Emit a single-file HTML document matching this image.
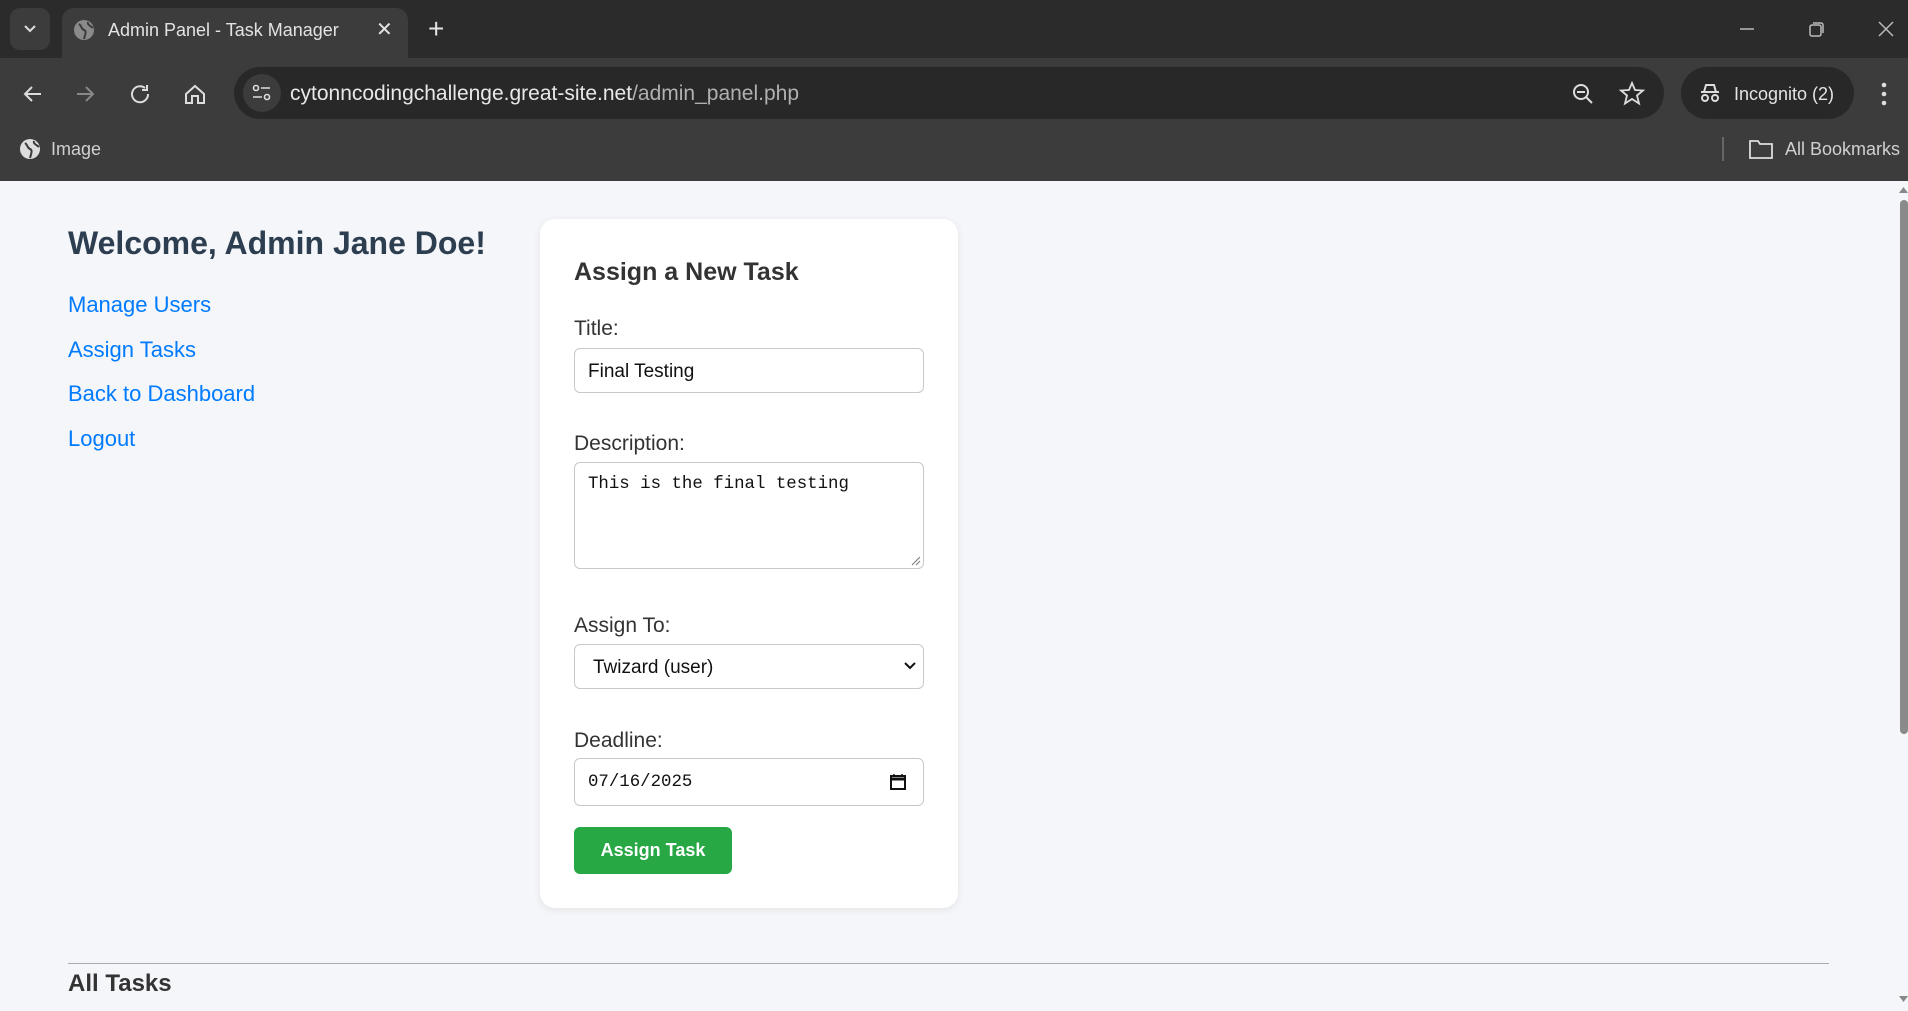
<!DOCTYPE html>
<html><head><meta charset="utf-8"><style>
*{box-sizing:border-box;margin:0;padding:0}
body{width:1908px;height:1011px;overflow:hidden;background:#f4f6f9;font-family:"Liberation Sans",sans-serif;position:relative}
.abs{position:absolute}
.chrome-top{left:0;top:0;width:1908px;height:58px;background:#2b2b2b}
.toolbar{left:0;top:58px;width:1908px;height:123px;background:#3c3c3c}
.tab{left:62px;top:8px;width:346px;height:52px;background:#3c3c3c;border-radius:12px 12px 0 0}
.t{color:#e3e3e3;font-size:18px;white-space:nowrap}
.omni{left:234px;top:67px;width:1430px;height:52px;background:#282828;border-radius:26px}
.incog{left:1681px;top:67px;width:173px;height:52px;background:#282828;border-radius:26px}
.lbl{color:#333;font-size:21px;left:574px}
.inp{left:574px;width:350px;background:#fff;border:1px solid #c8c8c8;border-radius:6px}
a{color:#007bff;text-decoration:none;font-size:22px;position:absolute;left:68px}
</style></head><body>
<div class="abs chrome-top"></div>
<div class="abs toolbar"></div>
<div class="abs" style="left:10px;top:8px;width:40px;height:42px;background:#3c3c3c;border-radius:10px"></div>
<svg class="abs" style="left:22px;top:22px" width="16" height="14"><path d="M3 4l5 5 5-5" stroke="#ddd" stroke-width="2" fill="none"/></svg>
<div class="abs tab"></div>
<svg class="abs" style="left:73px;top:19px" width="22" height="22"><circle cx="11" cy="11" r="10" fill="#8a8a8a"/><path d="M6 5c3 2 2 5 5 6s1 5 0 9M15 3c-1 3 3 4 5 6" stroke="#3c3c3c" stroke-width="2" fill="none"/></svg>
<div class="abs t" style="left:108px;top:20px">Admin Panel - Task Manager</div>
<div class="abs t" style="left:376px;top:17px;font-size:20px">✕</div>
<div class="abs t" style="left:428px;top:13px;font-size:28px">+</div>
<svg class="abs" style="left:1735px;top:18px" width="160" height="24"><path d="M5 11h14" stroke="#bbb" stroke-width="1.5"/><rect x="75" y="7" width="11" height="11" rx="2" stroke="#bbb" fill="none" stroke-width="1.5"/><path d="M78 5h8a2 2 0 0 1 2 2v8" stroke="#bbb" fill="none" stroke-width="1.5"/><path d="M144 4l14 14M158 4l-14 14" stroke="#bbb" stroke-width="1.5"/></svg>
<svg class="abs" style="left:20px;top:80px" width="200" height="28"><path d="M5 14h16M12 7l-7 7 7 7" stroke="#ddd" stroke-width="2" fill="none"/><path d="M57 14h16M66 7l7 7-7 7" stroke="#888" stroke-width="2" fill="none"/><path d="M125 8a8 8 0 1 0 3 6M127 5v5h-5" stroke="#ddd" stroke-width="2" fill="none"/><path d="M166 14l9-8 9 8v9h-6v-7h-6v7h-6z" stroke="#ddd" stroke-width="2" fill="none"/></svg>
<div class="abs omni"></div>
<div class="abs" style="left:243px;top:74px;width:38px;height:38px;border-radius:50%;background:#3c3c3c"></div>
<svg class="abs" style="left:250px;top:82px" width="24" height="22"><circle cx="6" cy="6" r="2.5" stroke="#ddd" fill="none" stroke-width="1.6"/><path d="M11 6h9M3 15h9" stroke="#ddd" stroke-width="1.6"/><circle cx="17" cy="15" r="2.5" stroke="#ddd" fill="none" stroke-width="1.6"/></svg>
<div class="abs t" style="left:290px;top:82px;font-size:21px"><span style="color:#e8e8e8">cytonncodingchallenge.great-site.net</span><span style="color:#b0b0b0">/admin_panel.php</span></div>
<svg class="abs" style="left:1568px;top:80px" width="80" height="28"><circle cx="13" cy="12" r="7" stroke="#ddd" stroke-width="2" fill="none"/><path d="M9 12h8M18 17l6 6" stroke="#ddd" stroke-width="2"/><path d="M64 3l3 7 8 .5-6 5 2 8-7-4.5-7 4.5 2-8-6-5 8-.5z" stroke="#ddd" stroke-width="1.8" fill="none"/></svg>
<div class="abs incog"></div>
<svg class="abs" style="left:1698px;top:81px" width="24" height="24"><path d="M3 11h18M6 11l2-7h8l2 7" stroke="#ddd" stroke-width="2" fill="none"/><circle cx="7" cy="17" r="3" stroke="#ddd" stroke-width="2" fill="none"/><circle cx="17" cy="17" r="3" stroke="#ddd" stroke-width="2" fill="none"/></svg>
<div class="abs t" style="left:1734px;top:84px">Incognito (2)</div>
<svg class="abs" style="left:1880px;top:82px" width="8" height="24"><circle cx="4" cy="3" r="2.3" fill="#ddd"/><circle cx="4" cy="12" r="2.3" fill="#ddd"/><circle cx="4" cy="21" r="2.3" fill="#ddd"/></svg>
<svg class="abs" style="left:19px;top:138px" width="22" height="22"><circle cx="11" cy="11" r="10" fill="#ddd"/><path d="M6 5c3 2 2 5 5 6s1 5 0 9M15 3c-1 3 3 4 5 6" stroke="#3c3c3c" stroke-width="2" fill="none"/></svg>
<div class="abs t" style="left:51px;top:139px;color:#d0d0d0">Image</div>
<div class="abs" style="left:1722px;top:137px;width:2px;height:24px;background:#666"></div>
<svg class="abs" style="left:1748px;top:138px" width="26" height="22"><path d="M2 3h8l2 3h12v14H2z" stroke="#ddd" stroke-width="1.8" fill="none"/></svg>
<div class="abs t" style="left:1785px;top:139px;color:#d0d0d0">All Bookmarks</div>

<div class="abs" style="left:68px;top:225px;font-size:32px;font-weight:bold;color:#2c3e50">Welcome, Admin Jane Doe!</div>
<a style="top:292px">Manage Users</a>
<a style="top:337px">Assign Tasks</a>
<a style="top:381px">Back to Dashboard</a>
<a style="top:426px">Logout</a>

<div class="abs" style="left:540px;top:219px;width:418px;height:689px;background:#fff;border-radius:15px;box-shadow:0 2px 8px rgba(0,0,0,.08)"></div>
<div class="abs" style="left:574px;top:258px;font-size:25px;font-weight:bold;color:#333">Assign a New Task</div>
<div class="abs lbl" style="top:317px">Title:</div>
<div class="abs inp" style="top:348px;height:45px"></div>
<div class="abs" style="left:588px;top:361px;font-size:19px;color:#111">Final Testing</div>
<div class="abs lbl" style="top:432px">Description:</div>
<div class="abs inp" style="top:462px;height:107px"></div>
<div class="abs" style="left:588px;top:475px;font-size:17.4px;font-family:'Liberation Mono',monospace;color:#111">This is the final testing</div>
<svg class="abs" style="left:910px;top:555px" width="12" height="12"><path d="M2 10l8-8M6 10l4-4" stroke="#777" stroke-width="1"/></svg>
<div class="abs lbl" style="top:614px">Assign To:</div>
<div class="abs inp" style="top:644px;height:45px"></div>
<div class="abs" style="left:593px;top:657px;font-size:19px;color:#111">Twizard (user)</div>
<svg class="abs" style="left:903px;top:661px" width="14" height="10"><path d="M2 2l5 5 5-5" stroke="#111" stroke-width="2" fill="none"/></svg>
<div class="abs lbl" style="top:729px">Deadline:</div>
<div class="abs inp" style="top:758px;height:48px"></div>
<div class="abs" style="left:588px;top:773px;font-size:17.4px;font-family:'Liberation Mono',monospace;color:#111">07/16/2025</div>
<svg class="abs" style="left:889px;top:773px" width="18" height="18"><rect x="2" y="3" width="14" height="13" stroke="#111" stroke-width="2" fill="none"/><path d="M2 6h14" stroke="#111" stroke-width="3"/><path d="M5 1v3M13 1v3" stroke="#111" stroke-width="1.5"/></svg>
<div class="abs" style="left:574px;top:827px;width:158px;height:47px;background:#28a745;border-radius:6px;color:#fff;font-weight:bold;font-size:18px;line-height:47px;text-align:center">Assign Task</div>

<div class="abs" style="left:68px;top:963px;width:1761px;height:1px;background:#aaa"></div>
<div class="abs" style="left:68px;top:970px;font-size:24px;font-weight:bold;color:#333">All Tasks</div>
<div class="abs" style="left:1896px;top:181px;width:12px;height:830px;background:#f4f6f9"></div>
<div class="abs" style="left:1900px;top:200px;width:8px;height:534px;background:#8a8a8a;border-radius:4px"></div>
<svg class="abs" style="left:1899px;top:186px" width="9" height="8"><path d="M0 7l4.5-6 4.5 6z" fill="#888"/></svg>
<svg class="abs" style="left:1899px;top:995px" width="9" height="8"><path d="M0 1l4.5 6 4.5-6z" fill="#888"/></svg>
</body></html>
